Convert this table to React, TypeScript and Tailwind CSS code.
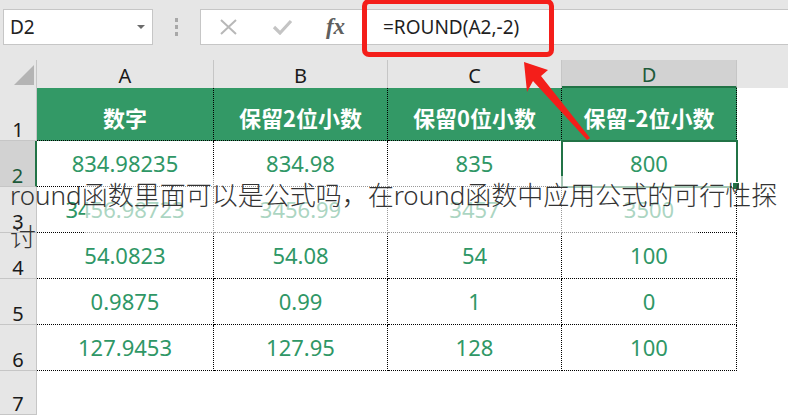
const sans = "font-['Noto_Sans','Noto_Sans_CJK_SC',sans-serif]"

const rows = [
  ['834.98235', '834.98', '835', '800'],
  ['3456.98723', '3456.99', '3457', '3500'],
  ['54.0823', '54.08', '54', '100'],
  ['0.9875', '0.99', '1', '0'],
  ['127.9453', '127.95', '128', '100'],
]

const heads = ['数字', '保留2位小数', '保留0位小数', '保留-2位小数']

function TopBar() {
  return (
    <div className="flex h-[60px] items-start bg-[#e6e6e6] pl-[3px] pt-[9px]">
      <div className="relative flex h-[36px] w-[150px] items-center border border-[#c6c6c6] bg-white pl-[6px] text-[19px] text-[#222]">
        D2
        <span className="absolute left-[133px] top-[15px] h-0 w-0 border-x-[4px] border-t-[4px] border-x-transparent border-t-[#6b6b6b]" />
      </div>
      <div className="flex h-[36px] w-[47px] flex-col items-center justify-center gap-[3px]">
        <span className="h-[4px] w-[3px] bg-[#a8a8a8]" />
        <span className="h-[4px] w-[3px] bg-[#a8a8a8]" />
        <span className="h-[4px] w-[3px] bg-[#a8a8a8]" />
      </div>
      <div className="flex h-[36px] flex-1 items-center border border-r-0 border-[#c6c6c6] bg-white">
        <div className="flex w-[54px] justify-center">
          <svg width="19" height="16" viewBox="0 0 19 16">
            <path d="M2 1 L17 15 M17 1 L2 15" stroke="#b8b8b8" strokeWidth="2" fill="none" />
          </svg>
        </div>
        <div className="flex w-[55px] justify-center">
          <svg width="21" height="16" viewBox="0 0 21 16">
            <path d="M2 8 L8 14 L19 2" stroke="#c4c4c4" strokeWidth="3.2" fill="none" />
          </svg>
        </div>
        <div className="flex w-[51px] justify-center font-['Liberation_Serif',serif] text-[23px] font-bold italic text-[#5f5f5f]">
          fx
        </div>
        <div className={`ml-[22px] text-[19px] text-[#1f1f1f] ${sans}`}>=ROUND(A2,-2)</div>
      </div>
    </div>
  )
}

function Sheet() {
  const rowHeader = 'flex items-end justify-center border-b border-r border-[#c6c6c6] bg-[#e6e6e6] text-[20px] leading-none text-[#1a1a1a]'
  const colHeader = 'flex items-center justify-center border-r border-[#c6c6c6] bg-[#e6e6e6] pt-[4px] text-[20px] text-[#1a1a1a]'

  return (
    <div className={`grid grid-cols-[37px_177px_174px_174px_175px_1fr] grid-rows-[28px_53px_46px_46px_46px_46px_46px_44px] ${sans}`}>
      {/* column headers */}
      <div className="relative border-r border-[#c6c6c6] bg-[#e6e6e6]">
        <svg className="absolute left-0 top-0" width="37" height="28" viewBox="0 0 37 28">
          <polygon points="34,5 34,25 14,25" fill="#b4b4b4" />
        </svg>
      </div>
      <div className={colHeader}>A</div>
      <div className={colHeader}>B</div>
      <div className={colHeader}>C</div>
      <div className="flex items-center justify-center border-b-2 border-r border-b-[#217346] border-r-[#c6c6c6] bg-[#d2d2d2] pt-[4px] text-[20px] text-[#1d5a3a]">
        D
      </div>
      <div className="bg-[#e6e6e6]" />

      {/* row 1 */}
      <div className={rowHeader}>1</div>
      {heads.map((h) => (
        <div
          key={h}
          className="flex items-center justify-center border-b border-r border-dotted border-black bg-[#339966] pt-[7px] font-['Noto_Sans_CJK_SC',sans-serif] text-[22px] font-bold text-white"
        >
          {h}
        </div>
      ))}
      <div className="bg-white" />

      {/* data rows */}
      {rows.map((r, i) => (
        <div key={i} className="contents">
          <div
            className={
              i === 0
                ? 'flex items-end justify-center border-b border-r-2 border-b-[#c6c6c6] border-r-[#217346] bg-[#d2d2d2] text-[20px] leading-none text-[#1d5a3a]'
                : rowHeader
            }
          >
            {i + 2}
          </div>
          {r.map((v, j) => (
            <div
              key={j}
              className="flex items-center justify-center border-b border-r border-dotted border-black bg-white text-[22px] text-[#2f9766]"
            >
              {v}
            </div>
          ))}
          <div className="bg-white" />
        </div>
      ))}

      {/* row 7 */}
      <div className={rowHeader}>7</div>
      <div className="col-span-5 bg-white" />
    </div>
  )
}

export default function App() {
  return (
    <div className="relative h-[415px] w-[788px] overflow-hidden bg-white">
      <TopBar />
      <Sheet />

      {/* active cell D2 */}
      <div className="absolute left-[561px] top-[140px] h-[48px] w-[177px] border-2 border-[#217346]" />
      <div className="absolute left-[732px] top-[182px] h-[8px] w-[8px] border border-white bg-[#217346]" />

      {/* faded band behind the caption */}
      <div className="absolute left-[85px] top-[176px] h-[40px] w-[645px] bg-white/60" />
      <div className="absolute left-[85px] top-[216px] h-[19px] w-[612px] bg-white/60" />

      {/* caption */}
      <div className={`absolute left-[10px] top-[174px] text-[26px] font-light leading-[42px] text-[#333] ${sans}`}>
        <div className="whitespace-nowrap">round函数里面可以是公式吗，在round函数中应用公式的可行性探</div>
        <div>讨</div>
      </div>

      {/* callout */}
      <div className="absolute left-[362px] top-[-1px] h-[58px] w-[192px] rounded-[7px] border-[5px] border-[#f41e1a]" />
      <svg className="pointer-events-none absolute left-0 top-0" width="788" height="415" viewBox="0 0 788 415">
        <polygon points="524,62 548,70 541,76 590,138 587,140 533,81 527,92" fill="#f41e1a" />
      </svg>
    </div>
  )
}
